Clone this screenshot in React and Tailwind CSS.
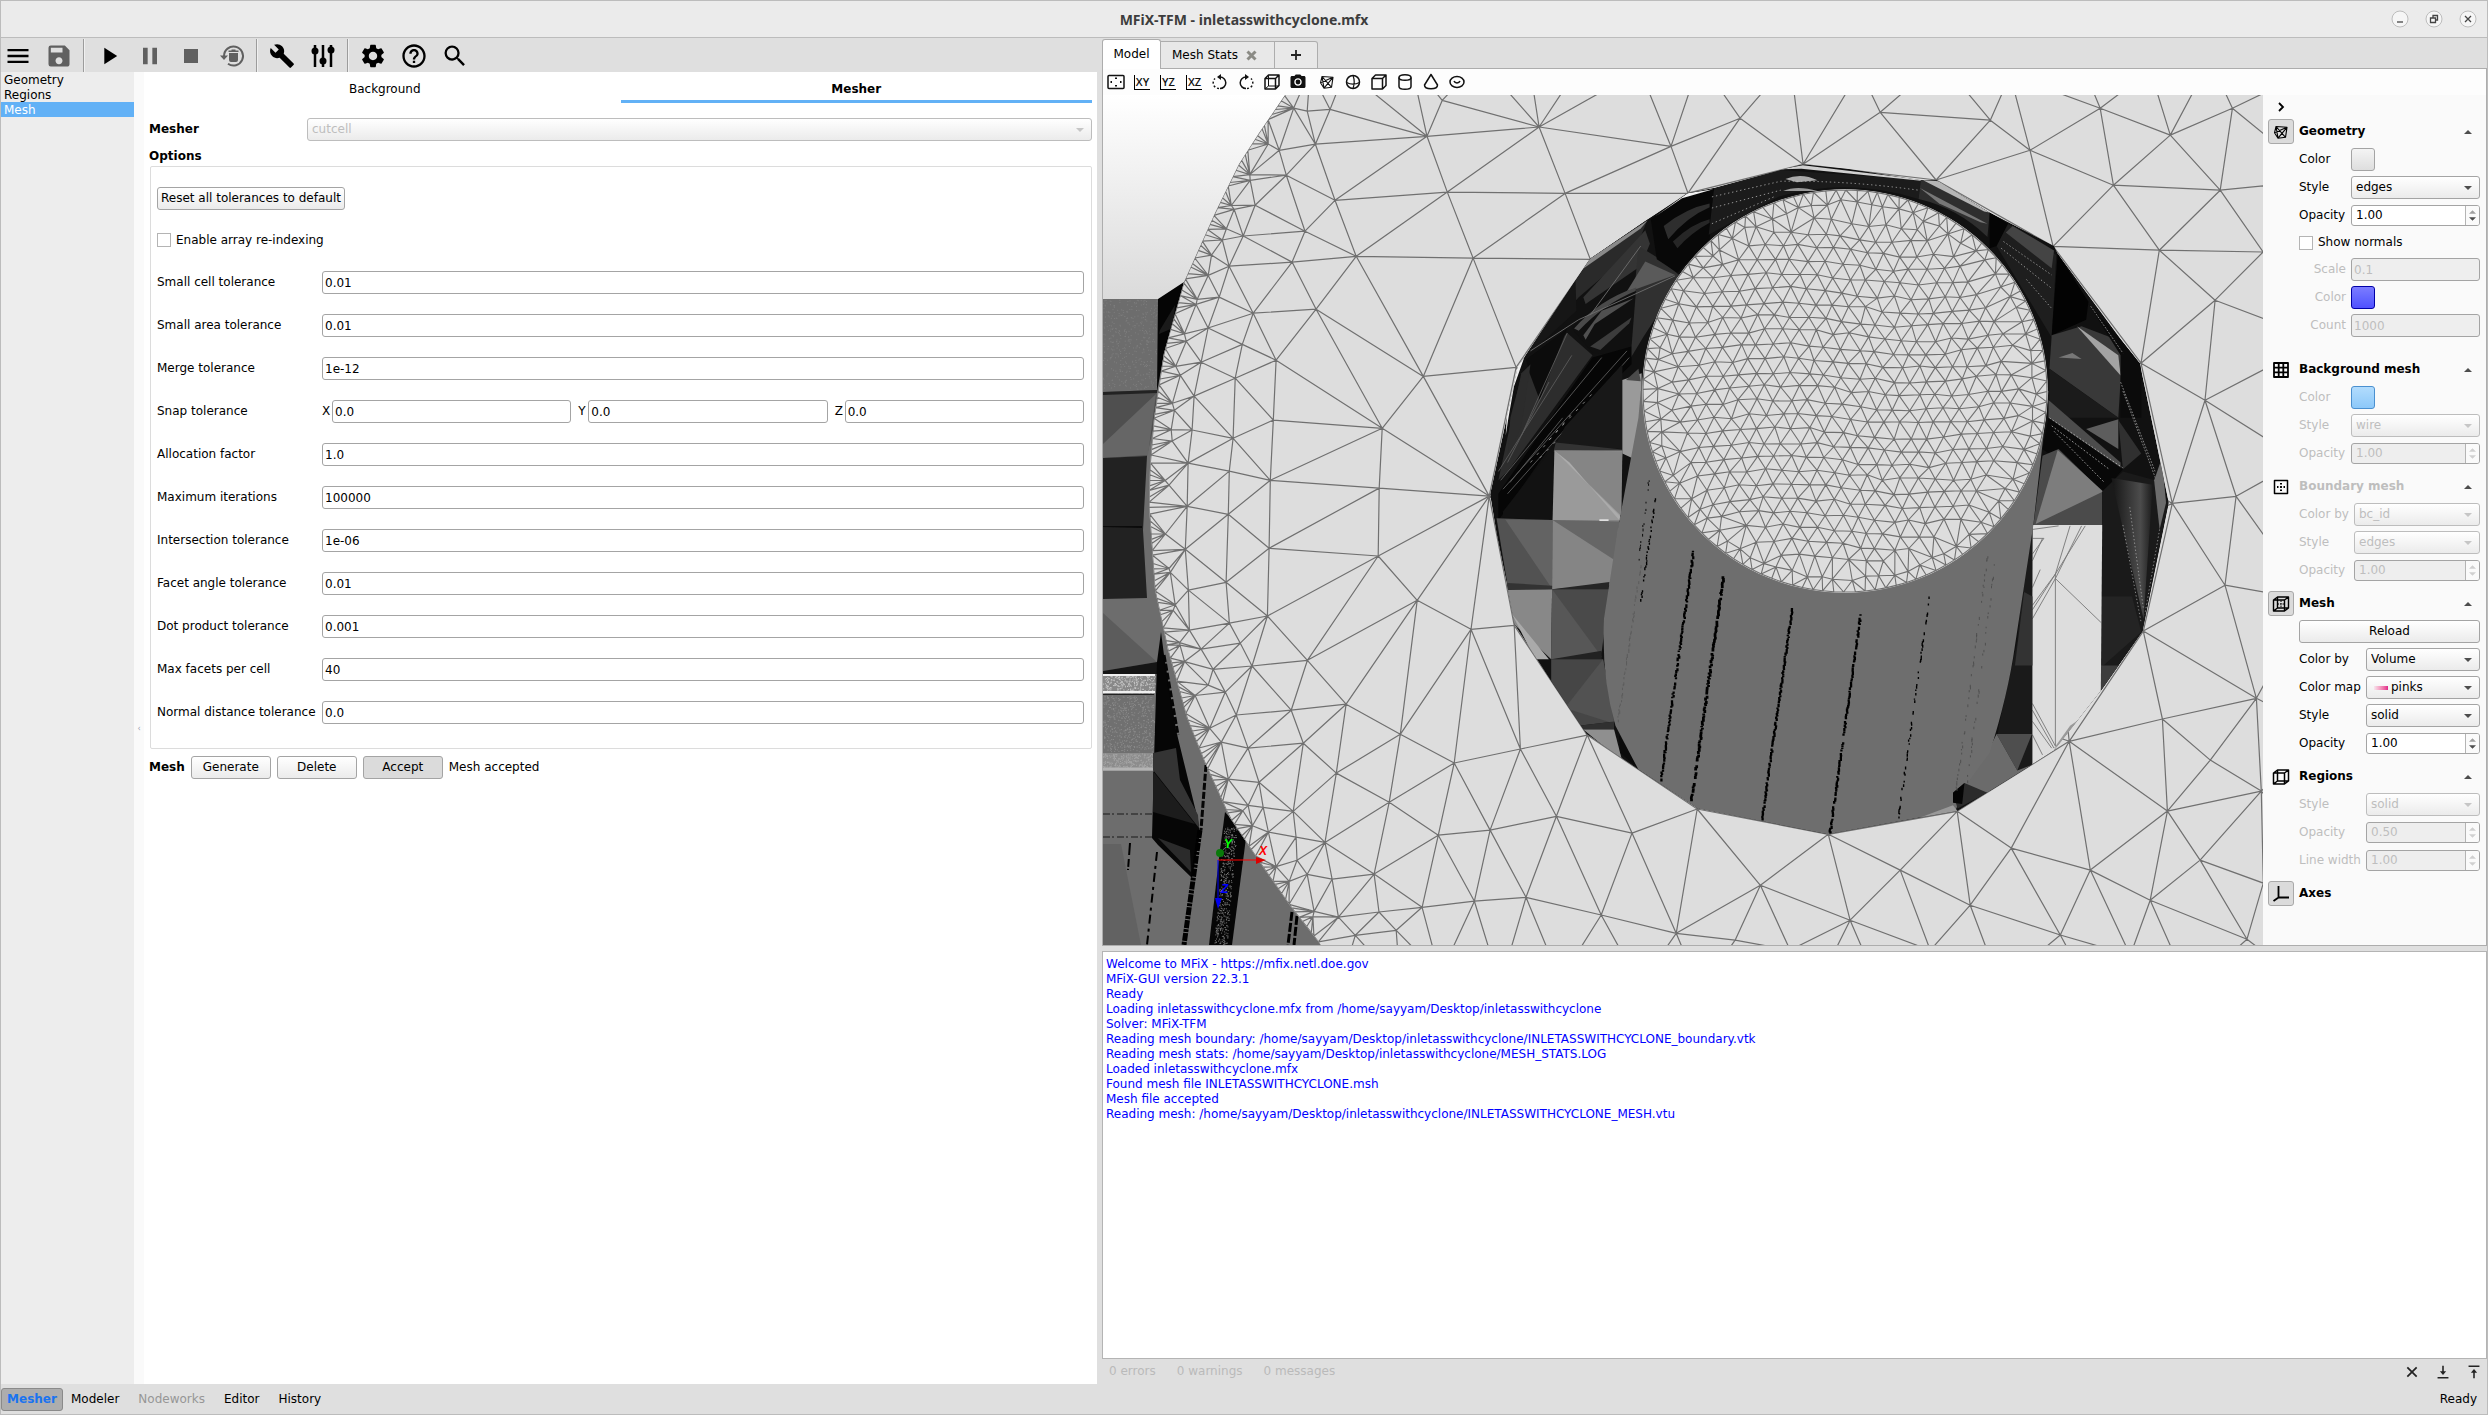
import { useState } from 'react';
import { MdMenu, MdSave, MdPlayArrow, MdPause, MdStop, MdBuild, MdSettings, MdHelpOutline, MdSearch, MdCameraAlt } from 'react-icons/md';
import clsx from 'clsx';

// ---------- mesh helpers ----------

function makeRandom(seed) {
  let s = seed;
  return () => {
    s = (s * 1664525 + 1013904223) % 4294967296;
    return s / 4294967296;
  };
}

// Bowyer-Watson, returns the edges as one path string
function triangulate(points) {
  const pts = [...points, [-9000, -9000], [12000, -9000], [1500, 14000]];
  const n = points.length;
  const circle = (a, b, c) => {
    const [ax, ay] = pts[a];
    const [bx, by] = pts[b];
    const [cx, cy] = pts[c];
    const d = 2 * (ax * (by - cy) + bx * (cy - ay) + cx * (ay - by)) || 1e-9;
    const a2 = ax * ax + ay * ay;
    const b2 = bx * bx + by * by;
    const c2 = cx * cx + cy * cy;
    const x = (a2 * (by - cy) + b2 * (cy - ay) + c2 * (ay - by)) / d;
    const y = (a2 * (cx - bx) + b2 * (ax - cx) + c2 * (bx - ax)) / d;
    return { v: [a, b, c], x, y, r: (ax - x) ** 2 + (ay - y) ** 2 };
  };
  let tris = [circle(n, n + 1, n + 2)];
  for (let i = 0; i < n; i++) {
    const [px, py] = pts[i];
    const edges = new Map();
    const keep = [];
    for (const t of tris) {
      if ((px - t.x) ** 2 + (py - t.y) ** 2 < t.r) {
        const [a, b, c] = t.v;
        for (const [p, q] of [[a, b], [b, c], [c, a]]) {
          const key = p < q ? `${p},${q}` : `${q},${p}`;
          if (edges.has(key)) edges.set(key, null);
          else edges.set(key, [p, q]);
        }
      } else {
        keep.push(t);
      }
    }
    for (const e of edges.values()) if (e) keep.push(circle(e[0], e[1], i));
    tris = keep;
  }
  const seen = new Set();
  let d = '';
  for (const t of tris) {
    const [a, b, c] = t.v;
    for (const [p, q] of [[a, b], [b, c], [c, a]]) {
      if (p >= n || q >= n) continue;
      const key = p < q ? `${p},${q}` : `${q},${p}`;
      if (seen.has(key)) continue;
      seen.add(key);
      d += `M${pts[p][0].toFixed(1)} ${pts[p][1].toFixed(1)}L${pts[q][0].toFixed(1)} ${pts[q][1].toFixed(1)}`;
    }
  }
  return d;
}

// rim of the large cylinder
const RIM = [
  [1285, 95], [1259, 133], [1239, 164], [1215, 213], [1184, 282], [1164, 353], [1154, 418], [1150, 467], [1149, 507],
  [1150, 520], [1155, 590], [1168, 650], [1187, 718], [1205, 763], [1230, 818], [1265, 870], [1291, 907], [1321, 945],
];

const WALL_POINTS = [
  [1330, 109], [1442, 100], [1427, 136], [1539, 127], [1671, 146], [1315, 144], [1307, 111], [1279, 150], [1286, 175],
  [1250, 180], [1255, 205], [1335, 200], [1447, 192], [1565, 193], [1688, 193], [1243, 236], [1305, 231], [1222, 240],
  [1234, 209], [1229, 266], [1292, 262], [1356, 256], [1473, 258], [1590, 259], [1208, 275], [1219, 297], [1196, 304],
  [1253, 313], [1316, 309], [1208, 328], [1186, 341], [1201, 362], [1242, 344], [1276, 360], [1180, 375], [1235, 378],
  [1423, 376], [1516, 367], [1194, 396], [1174, 410], [1192, 430], [1233, 438], [1273, 420], [1382, 428], [1172, 441],
  [1188, 463], [1229, 471], [1270, 480], [1379, 488], [1489, 496], [1169, 485], [1187, 506], [1228, 514],
  [1269, 548], [1378, 556], [1185, 549], [1417, 600], [1471, 629], [1514, 625], [1188, 590], [1226, 582], [1170, 572],
  [1267, 616], [1229, 623], [1189, 630], [1307, 660], [1240, 643], [1201, 649], [1252, 666], [1213, 669], [1180, 645],
  [1173, 610], [1346, 704], [1291, 710], [1236, 715], [1225, 692], [1208, 685], [1400, 734], [1454, 763], [1520, 749],
  [1587, 735], [1336, 773], [1303, 743], [1248, 748], [1221, 742], [1259, 782], [1389, 802], [1438, 835], [1490, 830],
  [1556, 816], [1632, 833], [1697, 809], [1293, 811], [1263, 807], [1325, 842], [1296, 837], [1268, 832], [1248, 805],
  [1374, 874], [1297, 860], [1422, 907], [1474, 901], [1526, 897], [1601, 915], [1676, 933], [1332, 879], [1307, 874],
  [1338, 917], [1379, 912], [1314, 911], [1396, 930], [1355, 935],
  [1803, 164], [1936, 180], [2113, 185], [2053, 246], [2159, 250], [2141, 363], [2172, 503], [2143, 631], [2162, 719],
  [2167, 811], [2069, 741], [1957, 811], [1828, 834], [2011, 848], [1740, 118], [1880, 112], [1990, 120],
  [2030, 150], [2100, 108], [2170, 135], [2232, 108], [2220, 190], [2263, 252], [2215, 300], [2236, 496], [2205, 400],
  [2256, 698], [2225, 585], [2261, 791], [2210, 760], [2200, 860], [2263, 883], [2247, 939], [2150, 900], [2090, 870],
  [2060, 935], [1970, 905], [1900, 870], [1850, 920], [1760, 885], [1735, 940], [1790, 950], [1930, 950], [2130, 955],
  [1345, 70], [1410, 60], [1480, 60], [1530, 70], [1580, 65], [1640, 70], [1700, 60], [1790, 60], [1860, 70],
  [1940, 60], [2010, 75], [2080, 60], [2150, 70], [2210, 60], [2290, 80], [2320, 180], [2320, 340], [2300, 460],
  [2310, 600], [2320, 730], [2310, 850], [2300, 980], [2190, 990], [2090, 990], [2000, 985], [1880, 990], [1820, 980],
  [1700, 990], [1640, 985], [1560, 980], [1500, 985], [1440, 975], [1400, 985], [1340, 985], [1310, 70],
  // behind the opening, keeps the long edges from crossing it
  [1845, 391], [1700, 391], [1845, 250], [1990, 391], [1845, 560], [1640, 560], [2050, 560], [1750, 700], [1950, 700],
];

const HOLE = '22,772 58,600 82,485 98,462 208,292 240,243 365,155 452,97 510,85 655,45 703,32 800,42 960,67 994,67 1110,140 1250,215 1258,232 1400,430 1437,478 1470,640 1500,790 1443,1078 1352,1212 1250,1345 1200,1378 1040,1481 757,1533 474,1475 345,1388 232,1308 155,1190 75,1063 58,970 36,858';

function buildWall() {
  const rand = makeRandom(7);
  const pts = WALL_POINTS.map(([x, y]) => [x + rand() * 0.4, y + rand() * 0.4]);
  for (let i = 0; i < RIM.length - 1; i++) {
    const [x0, y0] = RIM[i];
    const [x1, y1] = RIM[i + 1];
    const len = Math.hypot(x1 - x0, y1 - y0);
    const steps = Math.max(1, Math.round(len / 6));
    for (let k = 0; k < steps; k++) {
      const t = (k + rand() * 0.5) / steps;
      const x = x0 + (x1 - x0) * t;
      const y = y0 + (y1 - y0) * t;
      pts.push([x, y]);
      // a loose second row behind the rim
      if (k % 6 === 2) pts.push([x + 13 + rand() * 6, y - 3 + rand() * 8]);
    }
  }
  return triangulate(pts);
}

function buildDisc() {
  const rand = makeRandom(21);
  const pts = [];
  const cx = 1845;
  const cy = 391;
  for (let i = 0; i < 120; i++) {
    const a = ((i + rand() * 0.2) / 120) * Math.PI * 2;
    pts.push([cx + Math.cos(a) * 202, cy + Math.sin(a) * 201]);
  }
  for (let i = 0; i < 82; i++) {
    const a = ((i + rand() * 0.4) / 82) * Math.PI * 2;
    const r = 186 + rand() * 6;
    pts.push([cx + Math.cos(a) * r, cy + Math.sin(a) * r]);
  }
  let row = 0;
  for (let y = -182; y < 182; y += 14) {
    for (let x = -190; x < 190; x += 17) {
      const px = x + (row % 2) * 8 + (rand() - 0.5) * 4;
      const py = y + Math.sin(x / 45) * 5 + (rand() - 0.5) * 4;
      if (Math.hypot(px, py) < 177) pts.push([cx + px, cy + py]);
    }
    row++;
  }
  return triangulate(pts);
}

// short broken strokes running from one point to another
function streak(x0, y0, x1, y1, seed, density) {
  const rand = makeRandom(seed);
  const steps = Math.round((y1 - y0) / 4);
  let d = '';
  for (let i = 0; i < steps; i++) {
    if (rand() > density) continue;
    const t = i / steps;
    const x = x0 + (x1 - x0) * t + (rand() - 0.5) * 3;
    const y = y0 + (y1 - y0) * t;
    d += `M${x.toFixed(1)} ${y.toFixed(1)}v${(3 + rand() * 4).toFixed(1)}`;
  }
  return d;
}

function speckle(x, y, w, h, slant, count, seed) {
  const rand = makeRandom(seed);
  let d = '';
  for (let i = 0; i < count; i++) {
    const v = rand();
    d += `M${(x + rand() * w + slant * v).toFixed(1)} ${(y + v * h).toFixed(1)}h1`;
  }
  return d;
}

const WALL_MESH = buildWall();
const DISC_MESH = buildDisc();
const RIM_PATH = `M${RIM.map((p) => p.join(' ')).join('L')}L2270 950L2270 90L1288 90Z`;

function Viewport() {
  return (
    <svg viewBox="1103 95 1160 850" preserveAspectRatio="xMidYMid slice" className="block h-full w-full" role="img" aria-label="Mesh view">
      <defs>
        <linearGradient id="sky" x1="0" y1="0" x2="0" y2="1">
          <stop offset="0" stopColor="#ffffff" />
          <stop offset="1" stopColor="#dadada" />
        </linearGradient>
        <linearGradient id="darkEdge" x1="0" y1="0" x2="1" y2="0">
          <stop offset="0" stopColor="#151515" />
          <stop offset="0.7" stopColor="#4c4c4c" />
          <stop offset="1" stopColor="#1b1b1b" />
        </linearGradient>
        <clipPath id="rim"><path d={RIM_PATH} /></clipPath>
        <clipPath id="disc"><ellipse cx="1845" cy="391" rx="203" ry="202" /></clipPath>
        <clipPath id="hole"><polygon points={HOLE} /></clipPath>
      </defs>

      <rect x="1103" y="95" width="200" height="206" fill="url(#sky)" />

      {/* inlet duct, left of the rim */}
      <path d="M1103 299H1180L1150 467V520L1168 650L1230 818L1321 945H1103Z" fill="#6d6d6d" />
      <path d={speckle(1103, 300, 54, 90, 0, 420, 3)} stroke="#7e7e7e" />
      <path d="M1103 392L1157 390L1155 420L1147 456L1103 458Z" fill="#4f4f4f" />
      <path d="M1103 444L1156 394L1148 455L1103 458Z" fill="#666" />
      <path d="M1103 392L1157 390V393L1103 395Z" fill="#222" />
      <path d="M1103 458L1147 456L1143 530L1147 598L1103 599Z" fill="#222" />
      <path d="M1103 526H1142V528L1103 527Z" fill="#0b0b0b" />
      <path d="M1158 299L1184 282L1177 320L1164 353L1157 392Z" fill="#050505" />
      <path d="M1160 330L1175 305L1173 328L1159 334Z" fill="#1a1a1a" />
      <path d="M1103 613L1157 662L1103 671Z" fill="#5c5c5c" />
      <path d="M1103 671L1157 662V674H1103Z" fill="#151515" />
      <rect x="1103" y="674" width="52" height="20" fill="#888" />
      <path d={speckle(1103, 675, 52, 18, 0, 300, 5)} stroke="#c8c8c8" />
      <path d="M1103 675H1155M1103 692H1155" stroke="#f0f0f0" strokeWidth="2" />
      <path d="M1103 694.500H1154" stroke="#222" />
      <rect x="1103" y="695" width="52" height="58" fill="#707070" />
      <path d={speckle(1103, 696, 51, 56, 0, 520, 6)} stroke="#8c8c8c" />
      <rect x="1103" y="753" width="50" height="18" fill="#8c8c8c" />
      <path d={speckle(1103, 754, 50, 14, 0, 260, 8)} stroke="#a6a6a6" />
      <path d="M1103 769H1153" stroke="#b4b4b4" strokeWidth="3" />
      <path d="M1103 814H1152M1103 837H1152" stroke="#1a1a1a" strokeDasharray="7 2 2 3" />
      <path d="M1157 662L1161 632L1164 655L1176 730L1198 820L1200 834L1192 878L1158 845L1152 838L1154 760Z" fill="#060606" />
      <path d="M1153 753L1176 748L1180 780L1198 815L1199 828L1153 770Z" fill="#343434" />
      <path d="M1153 771L1195 824L1153 812Z" fill="#1c1c1c" />
      <path d="M1158 838L1190 850L1191 872Z" fill="#2b2b2b" />
      <path d="M1164 655L1178 735M1206 765L1201 830" stroke="#050505" strokeWidth="3" strokeDasharray="7 2" />
      <path d="M1103 844H1121L1141 945H1103Z" fill="#626262" />
      <path d="M1130 843L1128 870" stroke="#000" strokeWidth="2" strokeDasharray="12 4 8 2" />
      <path d="M1157 852L1147 945" stroke="#000" strokeWidth="2" strokeDasharray="9 5 3 4" />
      <path d="M1200 830L1184 945" stroke="#000" strokeWidth="5" strokeDasharray="8 1 3 1" />
      <path d="M1225 812L1232 820L1246 838L1232 945H1209L1220 850Z" fill="#060606" />
      <path d={speckle(1224, 828, 13, 117, -10, 420, 12)} stroke="#777" />
      <path d="M1292 912L1288 945M1297 916L1294 945" stroke="#000" strokeWidth="3" strokeDasharray="9 2" />

      {/* end wall */}
      <g clipPath="url(#rim)">
        <rect x="1103" y="90" width="1165" height="860" fill="#dddddd" />
        <path d={WALL_MESH} fill="none" stroke="#707070" strokeWidth="1.2" />
      </g>

      {/* opening and what is seen through it */}
      <g transform="translate(1480 150) scale(0.4592 0.4464)">
        <g clipPath="url(#hole)">
          <polygon points={HOLE} fill="#111" />

          {/* left side facets */}
          <path d="M98 462L208 292L240 243L365 155L340 220L215 330L110 450Z" fill="#2a2a2a" />
          <path d="M98 462L208 292L210 360L110 455Z" fill="#161616" />
          <path d="M212 275L240 243L365 158L350 176Z" fill="#8a8a8a" />
          <path d="M225 330L360 180L370 210L350 260L230 345Z" fill="#343434" />
          <path d="M345 215L385 240L440 285L355 420L320 480L335 330Z" fill="#303030" />
          <path d="M318 320L360 250L425 280Z" fill="#5a5a5a" />
          <path d="M372 155L452 97L510 85L500 200L430 275L385 245Z" fill="#080808" />
          <path d="M380 150L452 97L508 88L440 108Z" fill="#f2f2f2" />
          <path d="M400 170Q450 130 500 120L500 128Q450 150 410 200Z" fill="#2e2e2e" />
          <path d="M420 205Q460 165 500 155L500 163Q460 185 430 220Z" fill="#262626" />
          <path d="M90 500L190 410L245 460L60 720L40 740Z" fill="#2d2d2d" />
          <path d="M100 470L190 400L130 560L108 500Z" fill="#0c0c0c" />
          <path d="M200 400Q260 330 340 310L330 440L300 460L245 455Z" fill="#101010" />
          <path d="M205 400Q260 335 340 308L339 316Q270 345 215 405Z" fill="#4a4a4a" />
          <path d="M225 415L265 360L335 332L250 390L230 425Z" fill="#505050" />
          <path d="M240 440L330 375L325 388L262 448Z" fill="#3c3c3c" />
          <path d="M60 560L80 485L96 466L74 530L62 600L56 640Z" fill="#efefef" />
          <path d="M66 600L92 500L110 480L90 620L60 690Z" fill="#2c2c2c" />
          <path d="M40 770L245 465L330 440L330 480L170 640L40 830Z" fill="#060606" />
          <path d="M45 740L265 465M50 760L320 450M60 770L325 465M40 720L200 460M65 745L180 600M60 700L150 520M90 640L190 410" stroke="#5b5b5b" strokeWidth="2" fill="none" />
          <path d="M110 700L200 590M150 650L250 540M130 690L215 600" stroke="#bbb" strokeWidth="1.500" strokeDasharray="6 16" fill="none" />
          <path d="M110 450L215 380L425 282M240 370L350 215" stroke="#6f6f6f" strokeWidth="2" fill="none" />
          <path d="M185 620L310 480V670L165 660Z" fill="#181818" />
          <path d="M165 655L310 671V676H160Z" fill="#333" />
          <path d="M310 515L352 500V700L310 680Z" fill="#9a9a9a" />
          <path d="M318 515L345 490L350 518Z" fill="#4a4a4a" />
          <path d="M50 810L160 665L158 830L50 822Z" fill="#121212" />
          <path d="M162 673H310L305 830H158Z" fill="#9a9a9a" />
          <path d="M162 673L310 675L308 820Z" fill="#858585" />
          <path d="M162 673L305 820L304 830L195 700Z" fill="#ababab" />
          <path d="M36 825L158 829V985L60 975Z" fill="#525252" />
          <path d="M55 828L158 829L157 983Z" fill="#636363" />
          <path d="M158 829H303L290 975L157 984Z" fill="#858585" />
          <path d="M158 829L303 832L292 918Z" fill="#666" />
          <path d="M260 829H280" stroke="#fff" strokeWidth="3" />
          <path d="M58 985L157 984L155 1141L75 1063Z" fill="#888" />
          <path d="M70 1040L150 1141H120Z" fill="#aaa" />
          <path d="M60 970L157 976V984H58Z" fill="#333" />
          <path d="M157 984L282 968L280 985Z" fill="#262626" />
          <path d="M157 984H282L265 1125L155 1141Z" fill="#4a4a4a" />
          <path d="M157 984L265 1135L155 1141Z" fill="#575757" />
          <path d="M155 1141L265 1122V1141Z" fill="#222" />
          <path d="M155 1141H268L295 1280L215 1290L155 1190Z" fill="#464646" />
          <path d="M185 1250L268 1141L292 1285Z" fill="#525252" />
          <path d="M215 1290L292 1280V1298H225Z" fill="#303030" />
          <path d="M225 1298H292L310 1370Z" fill="#8f8f8f" />
          <path d="M303 1310L350 1390L305 1350Z" fill="#0a0a0a" />

          {/* top band */}
          <path d="M510 85L655 45L960 67L955 110Q800 60 650 105L498 190Z" fill="#1b1b1b" />
          <path d="M655 43L703 34L960 66V69L700 42Z" fill="#d0d0d0" />
          <path d="M665 65Q700 50 735 68L690 72Z" fill="#aaa" />
          <path d="M660 92Q690 78 735 92Z" fill="#999" />
          <path d="M505 105L655 70Q800 68 955 90M505 130L655 90M505 165L640 105" stroke="#ccc" strokeWidth="1.500" strokeDasharray="3 6" fill="none" />
          <path d="M960 67L994 67L1110 140L1105 195Q1040 130 955 110Z" fill="#2e2e2e" />
          <path d="M965 68L1000 70L1110 140L1098 138Z" fill="#b5b5b5" />
          <path d="M958 85L1105 165L1090 162L1000 120Z" fill="#777" />
          <path d="M1110 140L1150 165L1140 210L1110 220Z" fill="#050505" />

          {/* right side facets */}
          <path d="M1150 165L1255 235L1245 420L1125 215Z" fill="#1e1e1e" />
          <path d="M1160 170L1250 225L1245 265L1145 185Z" fill="#444" />
          <path d="M1140 205L1245 280M1135 220L1245 310M1190 290L1245 355" stroke="#ccc" strokeWidth="1.500" strokeDasharray="3 5" fill="none" />
          <path d="M1258 232L1325 340L1320 380L1245 415Z" fill="#030303" />
          <path d="M1245 415L1310 395L1400 430L1390 600L1240 490Z" fill="#393939" />
          <path d="M1300 395L1390 460L1395 505Z" fill="#a3a3a3" />
          <path d="M1325 345L1400 430L1440 480L1440 600L1395 600L1395 460Z" fill="#0b0b0b" />
          <path d="M1330 350L1400 455M1395 520L1470 720M1400 540L1480 760" stroke="#888" strokeWidth="2" strokeDasharray="4 3" fill="none" />
          <path d="M1260 465L1290 455L1310 468Z" fill="#777" />
          <path d="M1240 490L1390 600L1240 600Z" fill="#1b1b1b" />
          <path d="M1238 560L1395 700V712L1238 600Z" fill="#4c4c4c" />
          <path d="M1320 625L1390 603V670Z" fill="#5d5d5d" />
          <path d="M1238 600L1400 715L1355 770L1225 670Z" fill="#080808" />
          <path d="M1240 600L1400 712M1245 618L1370 715M1250 630L1360 745" stroke="#ccc" strokeWidth="1.500" strokeDasharray="4 4" fill="none" />
          <path d="M1390 605L1440 680L1400 715Z" fill="#303030" />
          <path d="M1225 685L1260 670L1355 765V842H1205Z" fill="#4b4b4b" />
          <path d="M1258 672L1357 765L1210 838Z" fill="#7d7d7d" />
          <path d="M1360 760L1400 720L1470 740L1500 790L1443 1078L1352 1212L1355 765Z" fill="#1a1a1a" />
          <path d="M1375 735L1465 750L1445 1050Z" fill="url(#darkEdge)" />
          <path d="M1468 740L1485 690L1494 790L1480 850Z" fill="#6c6c6c" />
          <path d="M1400 840L1440 1060M1415 800L1445 1030M1480 850L1448 1040" stroke="#bbb" strokeWidth="1.500" strokeDasharray="3 5" fill="none" />
          <path d="M1352 1000L1420 1000L1440 1080L1352 1160Z" fill="#242424" />
          <path d="M1352 1155H1400L1352 1212Z" fill="#3d3d3d" />

          {/* light wall seen at the lower right */}
          <path d="M1203 840H1355L1352 1212L1250 1345L1200 1378Z" fill="#dddddd" />
          <path d="M1203 850L1260 842M1225 870L1203 920M1285 842L1253 950L1203 1030M1310 842L1253 960L1203 1050M1318 842L1253 950L1203 1020M1253 950V1335L1203 1240M1253 960L1352 1058M1203 1280L1245 1340M1203 1255L1250 1340M1203 1310L1225 1355M1203 870H1228L1203 905M1203 980L1220 940" fill="none" stroke="#777" strokeWidth="2" />
          <path d="M1250 1340L1285 1290L1310 1272L1285 1325Z" fill="#999" />

          {/* inner pipe */}
          <path d="M1203 840V1400L1110 1440L1130 1290L1170 1100L1180 980Z" fill="#1a1a1a" />
          <path d="M1203 1000V1155H1165L1185 990Z" fill="#333" />
          <path d="M1125 1308H1202L1170 1390Z" fill="#4e4e4e" />
          <path d="M1125 1308L1100 1360L1040 1440L1105 1440L1200 1385V1378L1170 1390Z" fill="#6b6b6b" />
          <path d="M350 540L345 600L300 850L270 1050Q264 1180 295 1290L345 1388L474 1475L757 1533L1035 1481L1060 1420L1110 1350Q1150 1220 1165 1110L1205 840L1238 540Z" fill="#6e6e6e" />
          <path d="M1030 1440L1055 1418L1105 1440L1040 1475Z" fill="#2b2b2b" />
          <path d="M1030 1440L1055 1418L1050 1465L1030 1462Z" fill="#050505" />
          <path d="M960 1495L1030 1468L1040 1481Z" fill="#999" />
          <path d={streak(465, 898, 394, 1412, 31, 0.85)} stroke="#000" strokeWidth="5" />
          <path d={streak(530, 955, 460, 1462, 32, 0.9)} stroke="#000" strokeWidth="6" />
          <path d={streak(680, 1026, 614, 1500, 33, 0.92)} stroke="#000" strokeWidth="5" />
          <path d={streak(829, 1040, 762, 1530, 34, 0.85)} stroke="#000" strokeWidth="5" />
          <path d={streak(978, 1000, 910, 1505, 35, 0.45)} stroke="#000" strokeWidth="3" />
          <path d={streak(382, 780, 350, 1010, 36, 0.45)} stroke="#000" strokeWidth="3" />
          <path d={streak(368, 740, 345, 920, 37, 0.3)} stroke="#000" strokeWidth="2" />
          <path d={streak(350, 930, 300, 1280, 38, 0.5)} stroke="#5b5b5b" strokeWidth="2" />
          <path d={streak(1105, 910, 1035, 1450, 39, 0.3)} stroke="#4c4c4c" strokeWidth="2" />
          <path d={streak(1122, 920, 1060, 1420, 40, 0.25)} stroke="#4c4c4c" strokeWidth="2" />
        </g>
      </g>

      <g clipPath="url(#disc)">
        <ellipse cx="1845" cy="391" rx="203" ry="202" fill="#dddddd" />
        <path d={DISC_MESH} fill="none" stroke="#707070" strokeWidth="1.1" />
      </g>

      {/* axes triad */}
      <path d="M1218 860H1258" stroke="#f00" />
      <path d="M1256 857L1266 860L1256 864Z" fill="#d00" />
      <path d="M1218 860V900" stroke="#00f" />
      <path d="M1215 898H1222L1218 909Z" fill="#00e" />
      <circle cx="1220" cy="853" r="4" fill="#0a7a0a" />
      <g fontFamily="Liberation Sans" fontSize="12" fontStyle="italic" fontWeight="bold">
        <text x="1259" y="855" fill="#f00">X</text>
        <text x="1224" y="848" fill="#0f0">Y</text>
        <text x="1221" y="893" fill="#00f">Z</text>
      </g>
    </svg>
  );
}

// ---------- icons ----------

function Svg({ children, size = 'size-[18px]' }) {
  return (
    <svg viewBox="0 0 18 18" className={size} fill="none" stroke="currentColor" strokeWidth="1.5" strokeLinejoin="round" aria-hidden="true">
      {children}
    </svg>
  );
}

const ResetIcon = () => (
  <svg viewBox="0 0 28 28" className="size-7" fill="none" stroke="currentColor" strokeWidth="2" aria-hidden="true">
    <path d="M6 14a9.500 9.500 0 1 1 4 7.800" />
    <path d="M2 13.500h8L6 18z" fill="currentColor" stroke="none" />
    <path d="M11 11h9v7a2 2 0 0 1-2 2h-5a2 2 0 0 1-2-2zM10.500 8.500h10v1.500h-10zM13.500 7.500h4v1h-4z" fill="currentColor" stroke="none" />
  </svg>
);

const SlidersIcon = () => (
  <svg viewBox="0 0 28 28" className="size-7" fill="none" stroke="currentColor" strokeWidth="2.500" aria-hidden="true">
    <path d="M6 3v22M14 3v22M22 3v22" />
    <g fill="currentColor" stroke="none">
      <circle cx="6" cy="9" r="3.500" />
      <circle cx="14" cy="19" r="3.500" />
      <circle cx="22" cy="8" r="3.500" />
    </g>
  </svg>
);

const FitIcon = () => (
  <Svg>
    <rect x="1" y="2.500" width="16" height="13" rx="1" />
    <path d="M9 4.500v1.500M9 12v1.500M3.500 9H5M13 9h1.500" strokeWidth="2" />
  </Svg>
);
const RotateIcon = ({ flip }) => (
  <Svg>
    <g transform={flip ? 'matrix(-1 0 0 1 18 0)' : undefined}>
      <path d="M9 4a5.800 5.800 0 0 1 0 11.600" />
      <path d="M8 15.500a5.800 5.800 0 0 1-4-10" strokeDasharray="2 2" />
      <path d="M10 1v6L6 4z" fill="currentColor" stroke="none" />
    </g>
  </Svg>
);
const CubeIcon = ({ dots }) => (
  <Svg>
    <path d="M2 5.500h10.500V16H2zM2 5.500L5.500 2H16v10.500L12.500 16M12.500 5.500L16 2" />
    {dots && <path d="M5.500 2.500v10.500h10M2.500 15.500l3-2.500" strokeWidth="1" />}
  </Svg>
);
const MeshCubeIcon = () => (
  <Svg>
    <path d="M1.500 5h11v11h-11zM5.500 2h11v11h-11zM1.500 5l4-3M12.500 5l4-3M12.500 16l4-3M1.500 16l4-3" strokeWidth="1.400" />
    <path d="M9 5.500v7.500M5.500 9h7" strokeWidth="1" strokeDasharray="1.500 1" />
  </Svg>
);
const FrameCubeIcon = () => (
  <Svg>
    <path d="M1.500 5h11v11h-11zM5.500 2h11v11h-11zM1.500 5l4-3M12.500 5l4-3M12.500 16l4-3M1.500 16l4-3" strokeWidth="1.500" />
  </Svg>
);
const FacetIcon = () => (
  <Svg>
    <path d="M4 3.500l11 .8-1.500 10L6 15.200 2.500 9.800zM4 3.500l9.500 10.800M15 4.300L6 15.200M2.500 9.800L15 4.300M4 3.500L6 15.200" strokeWidth="1.100" />
  </Svg>
);
const SphereIcon = () => (
  <Svg>
    <circle cx="9" cy="9" r="6.500" />
    <path d="M2.500 9.500c4 2 9 2 13 0M9 2.500c1.500 4 1.500 9 0 13" strokeWidth="1.200" />
  </Svg>
);
const CylinderIcon = () => (
  <Svg>
    <ellipse cx="9" cy="4.500" rx="6" ry="2.800" />
    <path d="M3 4.500v9c0 3.800 12 3.800 12 0v-9" />
  </Svg>
);
const ConeIcon = () => (
  <Svg>
    <path d="M9 1.500L2.500 12c0 5 13 5 13 0z" />
  </Svg>
);
const TorusIcon = () => (
  <Svg>
    <ellipse cx="9" cy="9" rx="7" ry="5.500" />
    <path d="M6 8c1 2.500 5 2.500 6 0" />
  </Svg>
);
const GridIcon = () => (
  <Svg>
    <path d="M2 2h14v14H2zM6.700 2v14M11.300 2v14M2 6.700h14M2 11.300h14" strokeWidth="1.800" />
  </Svg>
);
const BoundaryIcon = () => (
  <Svg>
    <path d="M2.500 2.500h13v13h-13z" />
    <path d="M9 5v1.500M9 8.200v1.600M9 11.500V13M5 9h1.500M8.200 9h1.600M11.500 9H13" strokeWidth="2" />
  </Svg>
);
const AxesIcon = () => (
  <Svg>
    <path d="M6.500 1v11.500H17M6.500 12.500L1.500 16" strokeWidth="1.800" />
  </Svg>
);

// ---------- controls ----------

function Select({ id, value, disabled, className, icon }) {
  return (
    <div className={clsx('relative h-[23px] min-w-0', className)}>
      {icon}
      <select
        id={id}
        defaultValue={value}
        disabled={disabled}
        className={clsx(
          'h-full w-full appearance-none rounded-[3px] border bg-linear-to-b from-white to-[#ebebeb] pr-5 disabled:opacity-100',
          icon ? 'pl-[24px]' : 'pl-1',
          disabled ? 'border-[#bdbdbd] text-[#bebebe]' : 'border-[#a4a4a4] text-black'
        )}
      >
        <option>{value}</option>
      </select>
      <svg viewBox="0 0 8 4" className={clsx('pointer-events-none absolute top-1/2 right-[8px] h-1 w-2 -translate-y-1/2', disabled ? 'text-[#c6c6c6]' : 'text-[#4d4d4d]')} aria-hidden="true">
        <path d="M0 0h8L4 4z" fill="currentColor" />
      </svg>
    </div>
  );
}

function Spin({ id, value, disabled }) {
  return (
    <div className="flex h-[23px] items-center">
      <div className={clsx('flex h-[21px] w-full overflow-hidden rounded-[3px] border border-[#a4a4a4]', disabled ? 'bg-[#eee]' : 'bg-white')}>
        <input id={id} defaultValue={value} disabled={disabled} className={clsx('w-0 flex-1 bg-transparent px-1 outline-none', disabled ? 'text-[#bebebe]' : 'text-black')} />
        <div className="flex w-[14px] flex-col items-center justify-center gap-[3px] border-l border-[#b4b4b4] bg-[#fafafa]">
          <button type="button" aria-label="Increase" disabled={disabled} className={disabled ? 'text-[#d0d0d0]' : 'text-[#a0a0a0]'}>
            <svg viewBox="0 0 8 4" className="block h-1 w-[7px]"><path d="M0 4h8L4 0z" fill="currentColor" /></svg>
          </button>
          <button type="button" aria-label="Decrease" disabled={disabled} className={disabled ? 'text-[#d0d0d0]' : 'text-[#4d4d4d]'}>
            <svg viewBox="0 0 8 4" className="block h-1 w-[7px]"><path d="M0 0h8L4 4z" fill="currentColor" /></svg>
          </button>
        </div>
      </div>
    </div>
  );
}

function TextInput({ id, value, disabled, className }) {
  return (
    <input
      id={id}
      defaultValue={value}
      disabled={disabled}
      className={clsx('h-[23px] min-w-0 rounded-[3px] border border-[#a4a4a4] px-[2px] outline-none', disabled ? 'bg-[#eee] text-[#bebebe]' : 'bg-white text-black', className)}
    />
  );
}

function PushButton({ children, className, down }) {
  return (
    <button type="button" className={clsx('h-[23px] rounded-[3px] border border-[#a4a4a4]', down ? 'bg-[#dbdbdb]' : 'bg-linear-to-b from-white to-[#ebebeb]', className)}>
      {children}
    </button>
  );
}

// ---------- left side ----------

const TOOLBAR = [
  [
    { label: 'Menu', icon: <MdMenu className="size-7" /> },
    { label: 'Save', icon: <MdSave className="size-7" />, dim: true },
  ],
  [
    { label: 'Run', icon: <MdPlayArrow className="size-7" /> },
    { label: 'Pause', icon: <MdPause className="size-7" />, dim: true },
    { label: 'Stop', icon: <MdStop className="size-7" />, dim: true },
    { label: 'Reset', icon: <ResetIcon />, dim: true },
  ],
  [
    { label: 'Build', icon: <MdBuild className="size-[26px]" /> },
    { label: 'Parameters', icon: <SlidersIcon /> },
  ],
  [
    { label: 'Settings', icon: <MdSettings className="size-7" /> },
    { label: 'Help', icon: <MdHelpOutline className="size-7" /> },
    { label: 'Search', icon: <MdSearch className="size-7" /> },
  ],
];

function MainToolbar() {
  return (
    <div className="flex h-[34px] gap-[7px] bg-[#dfdfdf] pt-px">
      {TOOLBAR.map((group, i) => (
        <div key={i} className="flex gap-[7px]">
          {i > 0 && <span className="w-[2px] border-l border-[#9c9c9c] bg-[#f0f0f0]" />}
          {group.map((item) => (
            <button key={item.label} type="button" aria-label={item.label} className={clsx('flex w-[34px] items-center justify-center', item.dim ? 'text-[#606060]' : 'text-black')}>
              {item.icon}
            </button>
          ))}
        </div>
      ))}
    </div>
  );
}

const FIELDS = [
  { label: 'Small cell tolerance', value: '0.01' },
  { label: 'Small area tolerance', value: '0.01' },
  { label: 'Merge tolerance', value: '1e-12' },
  { label: 'Snap tolerance', axes: ['X', 'Y', 'Z'] },
  { label: 'Allocation factor', value: '1.0' },
  { label: 'Maximum iterations', value: '100000' },
  { label: 'Intersection tolerance', value: '1e-06' },
  { label: 'Facet angle tolerance', value: '0.01' },
  { label: 'Dot product tolerance', value: '0.001' },
  { label: 'Max facets per cell', value: '40' },
  { label: 'Normal distance tolerance', value: '0.0' },
];

function MesherPane() {
  const [tab, setTab] = useState('Mesher');
  return (
    <div className="min-w-0 flex-1 bg-white px-[5px]">
      <div className="flex">
        {['Background', 'Mesher'].map((name) => (
          <button
            key={name}
            type="button"
            onClick={() => setTab(name)}
            className={clsx('h-[31px] flex-1 border-b-3 pt-[6px]', tab === name ? 'border-[#62b1f6] font-bold' : 'border-transparent')}
          >
            {name}
          </button>
        ))}
      </div>

      <div className="mt-[15px] flex items-center">
        <label htmlFor="mesher" className="w-[158px] font-bold">Mesher</label>
        <Select id="mesher" value="cutcell" disabled className="flex-1" />
      </div>
      <h2 className="mt-2 font-bold">Options</h2>

      <div className="mt-[2px] ml-px rounded-[2px] border border-[#dcdcdc] px-[7px] pt-[20px] pb-[24px] pl-[6px]">
        <PushButton className="block px-[3px]">Reset all tolerances to default</PushButton>
        <div className="mt-[23px] mb-[24px] flex h-[14px] items-center gap-[5px]">
          <input id="reindex" type="checkbox" className="size-[14px] appearance-none border border-[#b4b4b4] bg-white" />
          <label htmlFor="reindex">Enable array re-indexing</label>
        </div>
        <div className="flex flex-col gap-5">
          {FIELDS.map((f, i) =>
            f.axes ? (
              <div key={f.label} className="flex items-center">
                <span className="w-[165px] shrink-0 whitespace-nowrap">{f.label}</span>
                <div className="flex flex-1 gap-[7px]">
                  {f.axes.map((a) => (
                    <div key={a} className="flex flex-1 items-center gap-[2px]">
                      <label htmlFor={`snap-${a}`} className="w-[8px]">{a}</label>
                      <TextInput id={`snap-${a}`} value="0.0" className="flex-1" />
                    </div>
                  ))}
                </div>
              </div>
            ) : (
              <div key={f.label} className="flex items-center">
                <label htmlFor={`field-${i}`} className="w-[165px] shrink-0 whitespace-nowrap">{f.label}</label>
                <TextInput id={`field-${i}`} value={f.value} className="flex-1" />
              </div>
            )
          )}
        </div>
      </div>

      <div className="mt-[7px] flex items-center gap-[6px]">
        <span className="font-bold">Mesh</span>
        <PushButton className="w-20">Generate</PushButton>
        <PushButton className="w-20">Delete</PushButton>
        <PushButton className="w-20" down>Accept</PushButton>
        <span>Mesh accepted</span>
      </div>
    </div>
  );
}

function LeftSide() {
  return (
    <div className="flex min-w-0 flex-col">
      <MainToolbar />
      <div className="flex flex-1">
        <nav className="w-[133px] bg-[#ededed]">
          {['Geometry', 'Regions', 'Mesh'].map((name) => (
            <a key={name} href={`#${name}`} className={clsx('block h-[15px] pt-px pl-[3px] leading-[14px]', name === 'Mesh' && 'bg-[#62b1f6] text-white')}>
              {name}
            </a>
          ))}
        </nav>
        <div className="flex w-[10px] items-center justify-center bg-[#fafafa] text-[8px] text-gray-400">‹</div>
        <MesherPane />
      </div>
    </div>
  );
}

// ---------- right side ----------

function PlaneLabel({ children }) {
  return (
    <span className="flex h-[15px] w-[16px] items-center justify-center border-b border-l border-black font-['Open_Sans'] text-[11px] leading-none font-semibold">
      {children}
    </span>
  );
}

const VIEW_TOOLS = [
  ['Fit', <FitIcon />],
  ['XY view', <PlaneLabel>XY</PlaneLabel>],
  ['YZ view', <PlaneLabel>YZ</PlaneLabel>],
  ['XZ view', <PlaneLabel>XZ</PlaneLabel>],
  ['Rotate left', <RotateIcon />],
  ['Rotate right', <RotateIcon flip />],
  ['Perspective', <CubeIcon dots />],
  ['Screenshot', <MdCameraAlt className="size-[18px]" />],
  ['Facets', <FacetIcon />],
  ['Sphere', <SphereIcon />],
  ['Box', <CubeIcon />],
  ['Cylinder', <CylinderIcon />],
  ['Cone', <ConeIcon />],
  ['Torus', <TorusIcon />],
];

function Section({ title, icon, active, faded, cols, className, children }) {
  return (
    <section className={className}>
      <div className="flex h-[25px] items-center">
        <button type="button" aria-label={`Toggle ${title}`} className={clsx('flex h-[25px] w-[26px] items-center justify-center rounded-[3px] border', active ? 'border-[#a9a9a9] bg-[#dbdbdb]' : 'border-transparent')}>
          {icon}
        </button>
        <h3 className={clsx('ml-[5px] flex-1 font-bold', faded && 'text-[#bebebe]')}>{title}</h3>
        {children && (
          <button type="button" aria-label={`Collapse ${title}`} className="mr-[8px] text-[#4d4d4d]">
            <svg viewBox="0 0 8 4" className="block h-1 w-2"><path d="M0 4h8L4 0z" fill="currentColor" /></svg>
          </button>
        )}
      </div>
      {children && <div className={clsx('mt-1 ml-[31px] grid items-center gap-y-[5px]', cols)}>{children}</div>}
    </section>
  );
}

function Label({ htmlFor, off, right, children }) {
  return (
    <label htmlFor={htmlFor} className={clsx('whitespace-nowrap', off && 'text-[#bebebe]', right && 'pr-[5px] text-right')}>
      {children}
    </label>
  );
}

function Swatch({ id, className }) {
  return <button id={id} type="button" className={clsx('h-[23px] w-6 rounded-[3px] border', className)} />;
}

function SidePanel() {
  return (
    <aside className="w-[223px] shrink-0 bg-[#fafafa] pr-[6px] pl-[5px]">
      <button type="button" aria-label="Hide panel" className="flex h-6 w-[26px] items-center justify-center">
        <svg viewBox="0 0 10 10" className="size-[10px]" fill="none" stroke="currentColor" strokeWidth="1.800"><path d="M3 1l4 4-4 4" /></svg>
      </button>

      <Section title="Geometry" icon={<FacetIcon />} active cols="grid-cols-[52px_1fr]">
        <Label htmlFor="geo-color">Color</Label>
        <Swatch id="geo-color" className="border-[#a4a4a4] bg-linear-to-b from-[#f4f4f4] to-[#dedede]" />
        <Label htmlFor="geo-style">Style</Label>
        <Select id="geo-style" value="edges" />
        <Label htmlFor="geo-opacity">Opacity</Label>
        <Spin id="geo-opacity" value="1.00" />
        <div className="col-span-2 flex h-[21px] items-center gap-[5px]">
          <input id="normals" type="checkbox" className="size-[14px] appearance-none border border-[#b4b4b4] bg-white" />
          <label htmlFor="normals">Show normals</label>
        </div>
        <Label htmlFor="geo-scale" off right>Scale</Label>
        <TextInput id="geo-scale" value="0.1" disabled />
        <Label htmlFor="geo-ncolor" off right>Color</Label>
        <Swatch id="geo-ncolor" className="border-[#0000a8] bg-linear-to-b from-[#7c7cff] to-[#5050ff]" />
        <Label htmlFor="geo-count" off right>Count</Label>
        <TextInput id="geo-count" value="1000" disabled />
      </Section>

      <Section title="Background mesh" icon={<GridIcon />} cols="grid-cols-[52px_1fr]" className="mt-5">
        <Label htmlFor="bg-color" off>Color</Label>
        <Swatch id="bg-color" className="border-[#4a90d0] bg-linear-to-b from-[#b2dcfd] to-[#8cc8f9]" />
        <Label htmlFor="bg-style" off>Style</Label>
        <Select id="bg-style" value="wire" disabled />
        <Label htmlFor="bg-opacity" off>Opacity</Label>
        <Spin id="bg-opacity" value="1.00" disabled />
      </Section>

      <Section title="Boundary mesh" icon={<BoundaryIcon />} faded cols="grid-cols-[55px_1fr]" className="mt-[9px]">
        <Label htmlFor="bc-color" off>Color by</Label>
        <Select id="bc-color" value="bc_id" disabled />
        <Label htmlFor="bc-style" off>Style</Label>
        <Select id="bc-style" value="edges" disabled />
        <Label htmlFor="bc-opacity" off>Opacity</Label>
        <Spin id="bc-opacity" value="1.00" disabled />
      </Section>

      <Section title="Mesh" icon={<MeshCubeIcon />} active cols="grid-cols-[67px_1fr]" className="mt-[9px]">
        <PushButton className="col-span-2">Reload</PushButton>
        <Label htmlFor="mesh-color">Color by</Label>
        <Select id="mesh-color" value="Volume" />
        <Label htmlFor="mesh-map">Color map</Label>
        <Select
          id="mesh-map"
          value="pinks"
          className="h-6"
          icon={<span className="pointer-events-none absolute top-1/2 left-[8px] h-1 w-[14px] -translate-y-1/2 bg-linear-to-r from-[#f5e6ee] to-[#e0218a]" />}
        />
        <Label htmlFor="mesh-style">Style</Label>
        <Select id="mesh-style" value="solid" />
        <Label htmlFor="mesh-opacity">Opacity</Label>
        <Spin id="mesh-opacity" value="1.00" />
      </Section>

      <Section title="Regions" icon={<FrameCubeIcon />} cols="grid-cols-[67px_1fr]" className="mt-[9px]">
        <Label htmlFor="reg-style" off>Style</Label>
        <Select id="reg-style" value="solid" disabled />
        <Label htmlFor="reg-opacity" off>Opacity</Label>
        <Spin id="reg-opacity" value="0.50" disabled />
        <Label htmlFor="reg-line" off>Line width</Label>
        <Spin id="reg-line" value="1.00" disabled />
      </Section>

      <Section title="Axes" icon={<AxesIcon />} active className="mt-[9px]" />
    </aside>
  );
}

const LOG = [
  'Welcome to MFiX - https://mfix.netl.doe.gov',
  'MFiX-GUI version 22.3.1',
  'Ready',
  'Loading inletasswithcyclone.mfx from /home/sayyam/Desktop/inletasswithcyclone',
  'Solver: MFiX-TFM',
  'Reading mesh boundary: /home/sayyam/Desktop/inletasswithcyclone/INLETASSWITHCYCLONE_boundary.vtk',
  'Reading mesh stats: /home/sayyam/Desktop/inletasswithcyclone/MESH_STATS.LOG',
  'Loaded inletasswithcyclone.mfx',
  'Found mesh file INLETASSWITHCYCLONE.msh',
  'Mesh file accepted',
  'Reading mesh: /home/sayyam/Desktop/inletasswithcyclone/INLETASSWITHCYCLONE_MESH.vtu',
];

function RightSide() {
  return (
    <div className="flex min-h-0 min-w-0 flex-col">
      <div className="flex h-[31px] items-end pt-px">
        <button type="button" className="h-[30px] w-[59px] rounded-t-[3px] border border-b-0 border-[#adadad] bg-white">Model</button>
        <div className="flex h-[28px] w-[114px] items-center border-t border-r border-b border-[#adadad] bg-[#e8e8e8] pl-[11px]">
          <button type="button" className="whitespace-nowrap">Mesh Stats</button>
          <button type="button" aria-label="Close Mesh Stats" className="ml-[8px] text-[#8b8b85]">
            <svg viewBox="0 0 11 11" className="size-[11px]" stroke="currentColor" strokeWidth="3"><path d="M1.500 1.500l8 8M9.500 1.500l-8 8" /></svg>
          </button>
        </div>
        <button type="button" aria-label="Add tab" className="flex h-[28px] w-[43px] items-center justify-center rounded-tr-[3px] border-t border-r border-b border-[#adadad] bg-[#e8e8e8]">
          <svg viewBox="0 0 10 10" className="size-[10px]" stroke="#222" strokeWidth="1.800"><path d="M5 0v10M0 5h10" /></svg>
        </button>
        <span className="flex-1 border-b border-[#adadad]" />
      </div>

      <div className="flex h-[877px] min-h-0 shrink flex-col border-r border-b border-l border-[#adadad] bg-[#fdfdfd]">
        <div className="flex h-[26px] shrink-0 items-center">
          {VIEW_TOOLS.map(([label, icon], i) => (
            <button key={label} type="button" aria-label={label} className={clsx('flex h-full w-[26px] items-center justify-center text-[#111]', i === 8 && 'ml-[3px]')}>
              {icon}
            </button>
          ))}
        </div>
        <div className="flex min-h-0 flex-1">
          <div className="min-w-0 flex-1">
            <Viewport />
          </div>
          <SidePanel />
        </div>
      </div>

      <div className="mt-[5px] min-h-0 flex-1 border border-[#b4b4b4] bg-white px-[3px] py-[5px] text-[#0000ff]">
        {LOG.map((line) => (
          <p key={line}>{line}</p>
        ))}
      </div>
      <div className="flex h-[25px] items-center pr-[6px] pl-[7px] text-[#bababa]">
        <span>0 errors</span>
        <span className="ml-[21px]">0 warnings</span>
        <span className="ml-[21px]">0 messages</span>
        <div className="ml-auto flex gap-[17px] text-[#222]">
          <button type="button" aria-label="Clear"><Svg size="size-[14px]"><path d="M3 3l12 12M15 3L3 15" strokeWidth="2.200" /></Svg></button>
          <button type="button" aria-label="Scroll to bottom"><Svg size="size-[14px]"><path d="M9 1v9M2 16.500h14" strokeWidth="2" /><path d="M5 8h8l-4 5z" fill="currentColor" stroke="none" /></Svg></button>
          <button type="button" aria-label="Scroll to top"><Svg size="size-[14px]"><path d="M9 17V8M2 1.500h14" strokeWidth="2" /><path d="M5 10h8L9 5z" fill="currentColor" stroke="none" /></Svg></button>
        </div>
      </div>
    </div>
  );
}

function TitleBar() {
  return (
    <header className="relative flex h-[37px] shrink-0 items-center justify-center border-b border-[#bcbcbc] bg-[#ebebeb]">
      <h1 className="font-['Noto_Sans'] text-[14px] font-bold text-[#3d3d3d]">MFiX-TFM - inletasswithcyclone.mfx</h1>
      <div className="absolute right-[10px] flex gap-[16px] text-[#444]">
        {[
          ['Minimize', 'M6 12h6'],
          ['Restore', 'M5.500 8h5v4.500h-5zM8 8V5.500h4.500V10H10.500'],
          ['Close', 'M6 6l6 6M12 6l-6 6'],
        ].map(([label, d]) => (
          <button key={label} type="button" aria-label={label}>
            <svg viewBox="0 0 18 18" className="block size-[18px]" fill="none" stroke="currentColor">
              <circle cx="9" cy="9" r="8" fill="#f6f6f6" stroke="#bdbdbd" />
              <path d={d} strokeWidth="1.300" />
            </svg>
          </button>
        ))}
      </div>
    </header>
  );
}

export default function App() {
  return (
    <div className="flex h-screen flex-col border border-[#bcbcbc] bg-[#dfdfdf] font-['DejaVu_Sans'] text-[12px] leading-[15px] text-black">
      <TitleBar />
      <main className="grid min-h-0 flex-1 grid-cols-[minmax(0,1096fr)_5px_minmax(0,1385fr)]">
        <LeftSide />
        <div />
        <RightSide />
      </main>
      <footer className="flex h-[30px] shrink-0 items-center pr-[10px]">
        <button type="button" className="h-[23px] w-[62px] rounded-[3px] border border-[#8a8a8a] bg-[#adadad] font-bold text-[#1a73f0]">Mesher</button>
        <div className="flex gap-[19px] pl-[8px]">
          <button type="button">Modeler</button>
          <button type="button" disabled className="text-[#969696]">Nodeworks</button>
          <button type="button">Editor</button>
          <button type="button">History</button>
        </div>
        <span className="ml-auto">Ready</span>
      </footer>
    </div>
  );
}
